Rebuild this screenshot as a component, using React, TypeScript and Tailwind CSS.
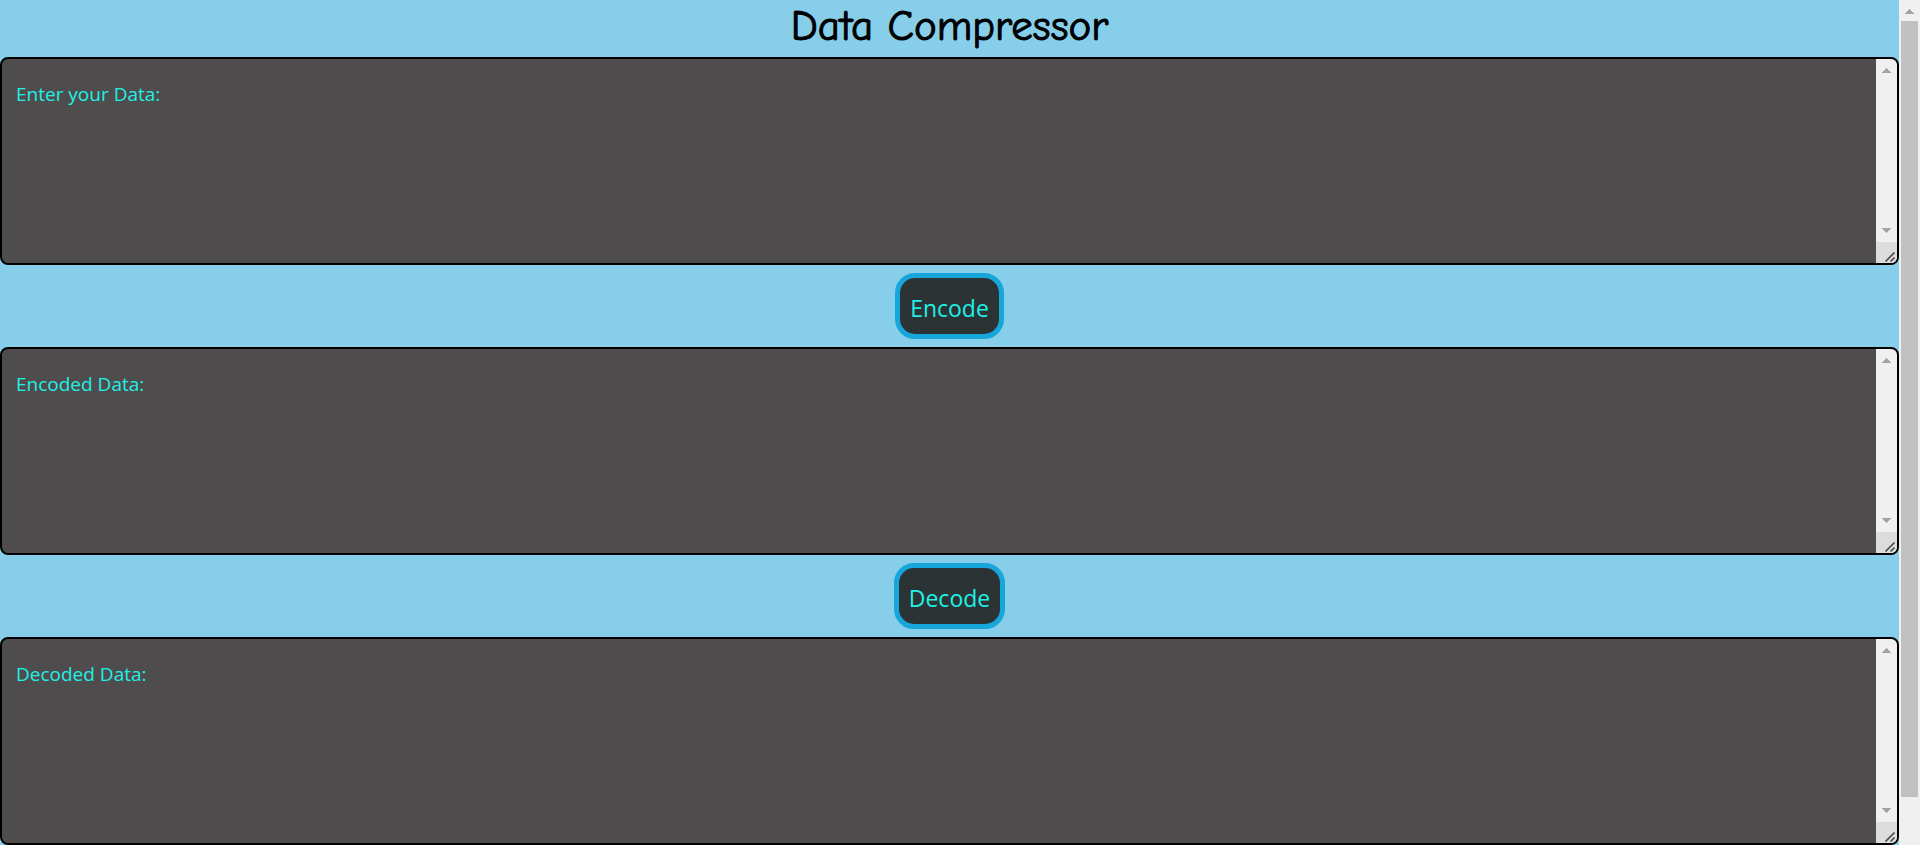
import React from "react";

function Arrow({ down = false }: { down?: boolean }) {
  return (
    <svg width="9" height="5" viewBox="0 0 9 5" shapeRendering="crispEdges" fill="#a3a3a3" aria-hidden="true">
      {down ? <path d="M0 0h9v1H8v1H7v1H6v1H5v1H4V4H3V3H2V2H1V1H0z" /> : <path d="M4 0h1v1h1v1h1v1h1v1h1v1H0V4h1V3h1V2h1V1h1z" />}
    </svg>
  );
}

function Grip() {
  return (
    <svg width="21" height="21" viewBox="0 0 21 21" className="block" fill="none" stroke="#4a4a4a" strokeWidth="1.7" aria-hidden="true">
      <path d="M9.5 19.5L18.5 10.5M14.5 19.5L18.5 15.5" />
    </svg>
  );
}

function DataBox({ label, readOnly = false }: { label: string; readOnly?: boolean }) {
  return (
    <div className="flex h-52 overflow-hidden rounded-lg border-2 border-black bg-[#4f4c4d]">
      <textarea
        aria-label={label}
        placeholder={label}
        readOnly={readOnly}
        className="min-w-0 flex-1 resize-none bg-transparent px-3.5 py-5 font-['Segoe_UI','Open_Sans',sans-serif] text-[19px]/[30px] text-[#1ff0e6] outline-none placeholder:text-[#1ff0e6] placeholder:opacity-100"
      />
      <div className="flex w-[21px] flex-col bg-[#f0f0f0]">
        <div className="flex flex-1 flex-col items-center justify-between py-[9px]">
          <Arrow />
          <Arrow down />
        </div>
        <div className="bg-[#dcdcdc]">
          <Grip />
        </div>
      </div>
    </div>
  );
}

function ActionButton({ children }: { children: React.ReactNode }) {
  return (
    <div className="flex justify-center py-2">
      <button
        type="button"
        className="rounded-[20px] border-5 border-[#17a6d9] bg-[#2c3335] px-2.5 pt-3 pb-2 font-['Segoe_UI','Open_Sans',sans-serif] text-[23px]/9 text-[#1ff0e6]"
      >
        {children}
      </button>
    </div>
  );
}

export default function App() {
  return (
    <div className="flex min-h-screen bg-[#87ceeb]">
      <main className="min-w-0 flex-1">
        <h1 className="pb-[5px] text-center font-['Comic_Sans_MS','Comic_Neue',cursive] text-[43px]/[52px] text-black [-webkit-text-stroke:1px_black]">
          Data Compressor
        </h1>
        <DataBox label="Enter your Data:" />
        <ActionButton>Encode</ActionButton>
        <DataBox label="Encoded Data:" readOnly />
        <ActionButton>Decode</ActionButton>
        <DataBox label="Decoded Data:" readOnly />
      </main>
      <div className="flex w-[21px] flex-col items-center bg-[#f0f0f0] pt-[9px] pb-12">
        <Arrow />
        <div className="mt-[7px] w-[17px] flex-1 bg-[#c1c1c1]" />
      </div>
    </div>
  );
}
